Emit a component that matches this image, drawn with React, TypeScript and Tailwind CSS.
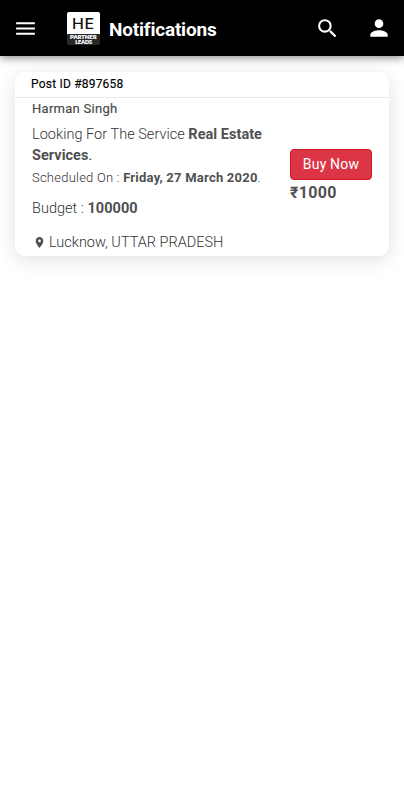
function Logo() {
  return (
    <svg className="block h-[33px] w-[33px]" viewBox="0 0 33 33" aria-label="HE Partner Leads">
      <rect width="33" height="33" rx="2" fill="#292929" />
      <path d="M2 0H31a2 2 0 0 1 2 2V22H0V2a2 2 0 0 1 2-2Z" fill="#fff" />
      <text x="4.9" y="16.7" textLength="23.2" lengthAdjust="spacingAndGlyphs" fontSize="14.4" fontWeight="500" letterSpacing="0.8" fill="#111" className="font-[Inter,sans-serif]">HE</text>
      <text x="3" y="26.8" textLength="26.5" lengthAdjust="spacingAndGlyphs" fontSize="5.4" fontWeight="900" fill="#fff" stroke="#fff" strokeWidth="0.2" className="font-[Lato,sans-serif]">PARTNER</text>
      <text x="8.3" y="31.7" textLength="16.6" lengthAdjust="spacingAndGlyphs" fontSize="4.7" fontWeight="900" fill="#fff" stroke="#fff" strokeWidth="0.2" className="font-[Lato,sans-serif]">LEADS</text>
    </svg>
  );
}

function Header() {
  return (
    <header className="relative flex h-14 items-center bg-black text-white shadow-[0_2px_8px_rgba(0,0,0,0.45)]">
      <svg className="ml-[13px] h-[25px] w-[25px]" viewBox="0 0 24 24" fill="currentColor">
        <path d="M3 18h18v-2H3v2zm0-5h18v-2H3v2zm0-7v2h18V6H3z" />
      </svg>
      <div className="ml-[29px]">
        <Logo />
      </div>
      <h1 className="ml-[9px] mt-[3px] text-[19px] font-bold leading-6 tracking-[-0.2px]">Notifications</h1>
      <svg className="ml-auto h-[25px] w-[25px]" viewBox="0 0 24 24" fill="currentColor">
        <path d="M15.5 14h-.79l-.28-.27A6.471 6.471 0 0 0 16 9.5 6.5 6.5 0 1 0 9.5 16c1.61 0 3.09-.59 4.23-1.57l.27.28v.79l5 4.99L20.49 19l-4.99-5zm-6 0C7.01 14 5 11.99 5 9.5S7.01 5 9.5 5 14 7.01 14 9.5 11.99 14 9.5 14z" />
      </svg>
      <svg className="ml-[26px] mr-[12px] h-[26px] w-[26px]" viewBox="0 0 24 24" fill="currentColor">
        <path d="M12 12c2.21 0 4-1.79 4-4s-1.79-4-4-4-4 1.79-4 4 1.79 4 4 4zm0 2c-2.67 0-8 1.34-8 4v2h16v-2c0-2.66-5.33-4-8-4z" />
      </svg>
    </header>
  );
}

function LeadCard() {
  return (
    <article className="mx-[15px] mt-4 flex h-[184px] flex-col rounded-[10px] bg-white text-[#333333] shadow-[0_4px_20px_rgba(0,0,0,0.12)]">
      <div className="h-[26px] border-b border-[#e8e8e8] pl-4 text-[12px] leading-6 tracking-[0.2px] text-black [-webkit-text-stroke:0.15px]">
        Post ID #897658
      </div>
      <div className="flex">
        <div className="w-[258px] pl-[17px]">
          <p className="text-[13px] leading-[21px] tracking-[0.27px] text-[#484848] [-webkit-text-stroke:0.15px]">Harman Singh</p>
          <p className="mt-[5px] text-[14.5px] font-light leading-[21px] tracking-[0.03px]">
            Looking For The Service <b className="font-bold text-[#505050]">Real Estate Services</b><span className="font-normal">.</span>
          </p>
          <p className="mt-[2px] text-[13px] font-light leading-5 tracking-[0.23px]">
            Scheduled On : <b className="font-bold text-[#505050]">Friday, 27 March 2020</b>.
          </p>
          <p className="mt-[11px] text-[14.5px] font-light leading-5 tracking-[0.03px]">
            Budget : <b className="font-bold text-[#505050]">100000</b>
          </p>
          <p className="ml-[1px] mt-[14px] flex items-center text-[14.5px] font-light leading-5">
            <svg className="mb-[2px] mr-[3px] h-[13px] w-[13px] text-[#505050]" viewBox="0 0 24 24" fill="currentColor">
              <path d="M12 2C8.13 2 5 5.13 5 9c0 5.25 7 13 7 13s7-7.75 7-13c0-3.87-3.13-7-7-7zm0 9.5a2.5 2.5 0 0 1 0-5 2.5 2.5 0 0 1 0 5z" />
            </svg>
            Lucknow, UTTAR PRADESH
          </p>
        </div>
        <div className="ml-[17px] mt-[51px]">
          <button className="block h-[31px] w-[82px] rounded-[4px] border border-[#d01325] bg-[#dc3545] text-[14px] leading-[29px] tracking-[0.18px] text-white">
            Buy Now
          </button>
          <p className="mt-px text-[16px] font-bold leading-6 tracking-[0.3px] text-[#505050]">₹1000</p>
        </div>
      </div>
    </article>
  );
}

export default function App() {
  return (
    <main className="h-[800px] overflow-hidden bg-white font-[Roboto,sans-serif]">
      <Header />
      <LeadCard />
    </main>
  );
}
